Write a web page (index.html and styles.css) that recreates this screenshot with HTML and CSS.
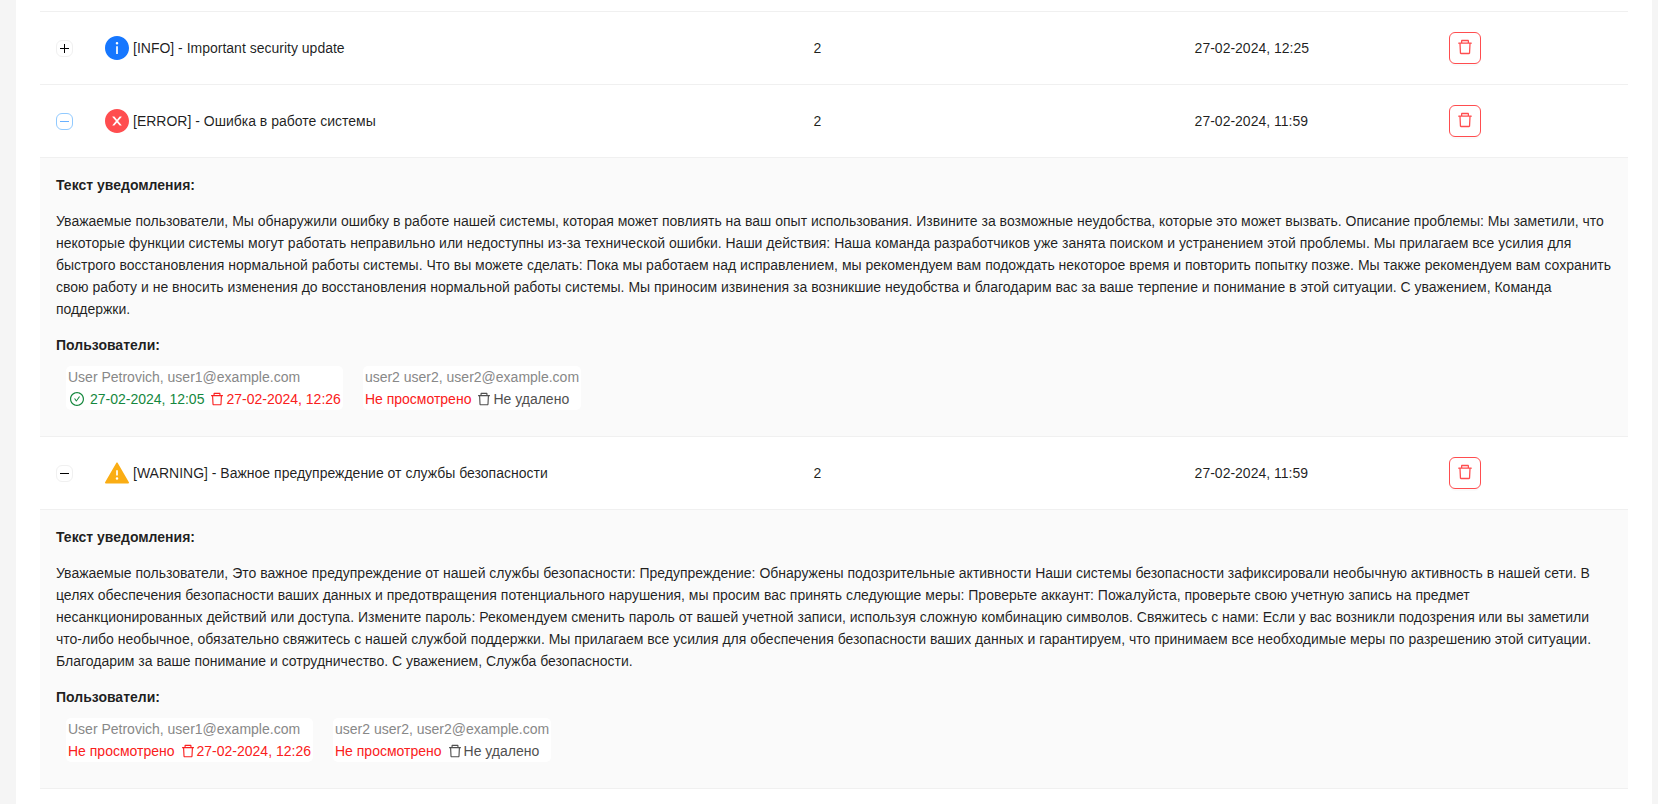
FILE: index.html
```html
<!DOCTYPE html>
<html lang="ru">
<head>
<meta charset="utf-8">
<title>Уведомления</title>
<meta name="viewport" content="width=device-width, initial-scale=1">
<link rel="stylesheet" href="styles.css">
</head>
<body>
<svg class="sprite" aria-hidden="true">
  <symbol id="trash" viewBox="64 64 896 896"><path d="M360 184h-8c4.400 0 8-3.600 8-8v8h304v-8c0 4.400 3.600 8 8 8h-8v72h72v-80c0-35.300-28.700-64-64-64H352c-35.300 0-64 28.700-64 64v80h72v-72zm504 72H160c-17.700 0-32 14.300-32 32v32c0 4.400 3.600 8 8 8h60.400l24.700 523c1.600 34.100 29.800 61 63.900 61h454c34.200 0 62.300-26.800 63.900-61l24.700-523H888c4.400 0 8-3.600 8-8v-32c0-17.700-14.300-32-32-32zM731.300 840H292.700l-24.200-512h487l-24.200 512z"/></symbol>
  <symbol id="check" viewBox="64 64 896 896"><path d="M699 353h-46.900c-10.200 0-19.900 4.900-25.900 13.300L469 584.300l-71.200-98.800c-6-8.300-15.600-13.300-25.900-13.300H325c-6.500 0-10.300 7.400-6.500 12.700l124.600 172.800a31.800 31.800 0 0051.700 0l210.600-292c3.900-5.300.1-12.700-6.400-12.700z"/><path d="M512 64C264.600 64 64 264.600 64 512s200.600 448 448 448 448-200.600 448-448S759.400 64 512 64zm0 820c-205.400 0-372-166.600-372-372s166.600-372 372-372 372 166.600 372 372-166.600 372-372 372z"/></symbol>
  <symbol id="info" viewBox="64 64 896 896"><path d="M512 64C264.600 64 64 264.600 64 512s200.600 448 448 448 448-200.600 448-448S759.400 64 512 64zm32 664c0 4.400-3.600 8-8 8h-48c-4.400 0-8-3.600-8-8V456c0-4.400 3.600-8 8-8h48c4.400 0 8 3.600 8 8v272zm-32-344a48 48 0 010-96 48 48 0 010 96z"/></symbol>
  <symbol id="error" viewBox="64 64 896 896"><path d="M512 64C264.600 64 64 264.600 64 512s200.600 448 448 448 448-200.600 448-448S759.400 64 512 64zm165.400 618.200l-66-.3L512 563.400l-99.300 118.400-66.100.3c-4.400 0-8-3.500-8-8 0-1.900.7-3.700 1.900-5.200l130.100-155L340.500 359a8.300 8.300 0 01-1.900-5.200c0-4.400 3.600-8 8-8l66.100.3L512 464.600l99.300-118.400 66-.3c4.400 0 8 3.500 8 8 0 1.900-.7 3.700-1.900 5.200L553.500 514l130 155c1.200 1.500 1.900 3.300 1.900 5.200 0 4.400-3.600 8-8 8z"/></symbol>
  <symbol id="warning" viewBox="64 64 896 896"><path d="M955.700 856l-416-720c-6.200-10.700-16.900-16-27.700-16s-21.600 5.300-27.700 16l-416 720C56 877.400 71.400 904 96 904h832c24.600 0 40-26.600 27.700-48zM480 416c0-4.400 3.600-8 8-8h48c4.400 0 8 3.600 8 8v184c0 4.400-3.600 8-8 8h-48c-4.400 0-8-3.600-8-8V416zm32 352a48 48 0 010-96 48 48 0 010 96z"/></symbol>
</svg>
<main class="panel">
  <table class="notices">
    <colgroup>
      <col class="col-toggle"><col><col class="col-count"><col class="col-date"><col class="col-actions">
    </colgroup>
    <tbody>
      <tr class="row">
        <td><button class="toggle" type="button" aria-expanded="false" aria-label="Развернуть строку"></button></td>
        <td><div class="title"><svg class="icon-type is-info" aria-hidden="true"><use href="#info"/></svg><span>[INFO] - Important security update</span></div></td>
        <td>2</td>
        <td>27-02-2024, 12:25</td>
        <td><button class="delete" type="button" aria-label="Удалить"><svg class="icon-delete" aria-hidden="true"><use href="#trash"/></svg></button></td>
      </tr>
      <tr class="row">
        <td><button class="toggle is-active" type="button" aria-expanded="true" aria-label="Свернуть строку"></button></td>
        <td><div class="title"><svg class="icon-type is-error" aria-hidden="true"><use href="#error"/></svg><span>[ERROR] - Ошибка в работе системы</span></div></td>
        <td>2</td>
        <td>27-02-2024, 11:59</td>
        <td><button class="delete" type="button" aria-label="Удалить"><svg class="icon-delete" aria-hidden="true"><use href="#trash"/></svg></button></td>
      </tr>
      <tr class="details">
        <td colspan="5">
          <strong class="heading">Текст уведомления:</strong>
          <p class="message">Уважаемые пользователи, Мы обнаружили ошибку в работе нашей системы, которая может повлиять на ваш опыт использования. Извините за возможные неудобства, которые это может вызвать. Описание проблемы: Мы заметили, что некоторые функции системы могут работать неправильно или недоступны из-за технической ошибки. Наши действия: Наша команда разработчиков уже занята поиском и устранением этой проблемы. Мы прилагаем все усилия для быстрого восстановления нормальной работы системы. Что вы можете сделать: Пока мы работаем над исправлением, мы рекомендуем вам подождать некоторое время и повторить попытку позже. Мы также рекомендуем вам сохранить свою работу и не вносить изменения до восстановления нормальной работы системы. Мы приносим извинения за возникшие неудобства и благодарим вас за ваше терпение и понимание в этой ситуации. С уважением, Команда поддержки.</p>
          <strong class="heading">Пользователи:</strong>
          <div class="users">
            <div class="user">
              <div class="name">User Petrovich, user1@example.com</div>
              <div class="states">
                <span class="state viewed"><svg class="icon-state" aria-hidden="true"><use href="#check"/></svg>27-02-2024, 12:05</span>
                <span class="state alert"><svg class="icon-state" aria-hidden="true"><use href="#trash"/></svg>27-02-2024, 12:26</span>
              </div>
            </div>
            <div class="user">
              <div class="name">user2 user2, user2@example.com</div>
              <div class="states">
                <span class="state alert">Не просмотрено</span>
                <span class="state kept"><svg class="icon-state" aria-hidden="true"><use href="#trash"/></svg>Не удалено</span>
              </div>
            </div>
          </div>
        </td>
      </tr>
      <tr class="row">
        <td><button class="toggle" type="button" aria-expanded="true" aria-label="Свернуть строку"></button></td>
        <td><div class="title"><svg class="icon-type is-warning" aria-hidden="true"><use href="#warning"/></svg><span>[WARNING] - Важное предупреждение от службы безопасности</span></div></td>
        <td>2</td>
        <td>27-02-2024, 11:59</td>
        <td><button class="delete" type="button" aria-label="Удалить"><svg class="icon-delete" aria-hidden="true"><use href="#trash"/></svg></button></td>
      </tr>
      <tr class="details">
        <td colspan="5">
          <strong class="heading">Текст уведомления:</strong>
          <p class="message">Уважаемые пользователи, Это важное предупреждение от нашей службы безопасности: Предупреждение: Обнаружены подозрительные активности Наши системы безопасности зафиксировали необычную активность в нашей сети. В целях обеспечения безопасности ваших данных и предотвращения потенциального нарушения, мы просим вас принять следующие меры: Проверьте аккаунт: Пожалуйста, проверьте свою учетную запись на предмет несанкционированных действий или доступа. Измените пароль: Рекомендуем сменить пароль от вашей учетной записи, используя сложную комбинацию символов. Свяжитесь с нами: Если у вас возникли подозрения или вы заметили что-либо необычное, обязательно свяжитесь с нашей службой поддержки. Мы прилагаем все усилия для обеспечения безопасности ваших данных и гарантируем, что принимаем все необходимые меры по разрешению этой ситуации. Благодарим за ваше понимание и сотрудничество. С уважением, Служба безопасности.</p>
          <strong class="heading">Пользователи:</strong>
          <div class="users">
            <div class="user">
              <div class="name">User Petrovich, user1@example.com</div>
              <div class="states">
                <span class="state alert">Не просмотрено</span>
                <span class="state alert"><svg class="icon-state" aria-hidden="true"><use href="#trash"/></svg>27-02-2024, 12:26</span>
              </div>
            </div>
            <div class="user">
              <div class="name">user2 user2, user2@example.com</div>
              <div class="states">
                <span class="state alert">Не просмотрено</span>
                <span class="state kept"><svg class="icon-state" aria-hidden="true"><use href="#trash"/></svg>Не удалено</span>
              </div>
            </div>
          </div>
        </td>
      </tr>
    </tbody>
  </table>
</main>
</body>
</html>
```
FILE: styles.css
```css
* {
  box-sizing: border-box;
}

body {
  margin: 0;
  padding: 0 6px 0 16px;
  background: #f5f5f5;
  color: rgba(0, 0, 0, 0.88);
  font-family: "Liberation Sans", Arial, sans-serif;
  font-size: 14px;
  line-height: 22px;
}

svg {
  flex: none;
  fill: currentColor;
}

.sprite {
  display: none;
}

.panel {
  min-height: 100vh;
  padding: 11px 24px 0;
  background: #fff;
}

.notices {
  width: 100%;
  table-layout: fixed;
  border-collapse: separate;
  border-spacing: 0;
  border-top: 1px solid #f0f0f0;
}

.col-toggle {
  width: 49px;
}

.col-count {
  width: 24%;
}

.col-date {
  width: 16%;
}

.col-actions {
  width: 12.3%;
}

.notices td {
  padding: 16px;
  border-bottom: 1px solid #f0f0f0;
}

.row td {
  height: 73px;
}

.toggle {
  display: grid;
  place-items: center;
  width: 17px;
  height: 17px;
  padding: 0;
  border: 1px solid #f0f0f0;
  border-radius: 6px;
  background: #fff;
  color: #000;
}

.toggle::before,
.toggle::after {
  content: "";
  grid-area: 1 / 1;
  width: 9px;
  height: 1px;
  background: currentColor;
}

.toggle::after {
  width: 1px;
  height: 9px;
}

.toggle[aria-expanded="true"]::after {
  display: none;
}

.toggle.is-active {
  border-color: #91caff;
  color: #69b1ff;
}

.title {
  display: flex;
  align-items: center;
  gap: 4px;
}

.icon-type {
  width: 24px;
  height: 24px;
}

.is-info {
  color: #1677ff;
}

.is-error {
  color: #ff4d4f;
}

.is-warning {
  color: #faad14;
}

.delete {
  display: flex;
  justify-content: center;
  width: 32px;
  height: 32px;
  padding: 6px 0;
  border: 1px solid #ff4d4f;
  border-radius: 6px;
  background: #fff;
  color: #ff4d4f;
  box-shadow: 0 2px 0 rgba(0, 0, 0, 0.02);
}

.icon-delete {
  width: 16px;
  height: 16px;
}

.details td {
  background: #fafafa;
}

.heading {
  display: block;
  font-weight: 700;
}

.message {
  margin: 14px 0;
}

.users {
  display: flex;
  flex-wrap: wrap;
  gap: 20px;
  padding: 10px;
}

.user {
  padding: 0 2px;
  border-radius: 5px;
  background: #fff;
}

.name {
  color: #888;
}

.states {
  display: flex;
  gap: 6px;
}

.state {
  display: flex;
  align-items: center;
  gap: 2px;
}

.icon-state {
  width: 14px;
  height: 14px;
}

.viewed {
  gap: 6px;
  padding-left: 2px;
  color: #15883e;
}

.alert {
  color: #fa2020;
}

.kept {
  color: #505050;
}
```
